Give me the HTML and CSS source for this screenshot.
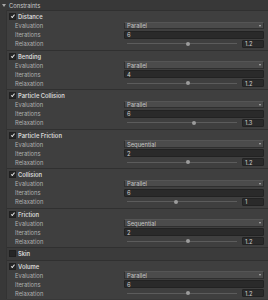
FILE: index.html
```html
<!DOCTYPE html>
<html lang="en">
<head>
<meta charset="UTF-8">
<title>Constraints</title>
<link rel="stylesheet" href="styles.css">
</head>
<body>
<div class="panel">
  <div class="title"><span class="fold"></span>Constraints</div>
  <div class="list">

    <section class="group">
      <div class="head"><span class="check on"></span>Distance</div>
      <div class="row"><span class="label">Evaluation</span><div class="select">Parallel<span class="arrow"></span></div></div>
      <div class="row"><span class="label">Iterations</span><div class="number">6</div></div>
      <div class="row"><span class="label">Relaxation</span><div class="slider"><div class="track"><span class="knob" style="left:55.6%"></span></div><div class="value">1.2</div></div></div>
    </section>

    <section class="group">
      <div class="head"><span class="check on"></span>Bending</div>
      <div class="row"><span class="label">Evaluation</span><div class="select">Parallel<span class="arrow"></span></div></div>
      <div class="row"><span class="label">Iterations</span><div class="number">4</div></div>
      <div class="row"><span class="label">Relaxation</span><div class="slider"><div class="track"><span class="knob" style="left:55.6%"></span></div><div class="value">1.2</div></div></div>
    </section>

    <section class="group">
      <div class="head"><span class="check on"></span>Particle Collision</div>
      <div class="row"><span class="label">Evaluation</span><div class="select">Parallel<span class="arrow"></span></div></div>
      <div class="row"><span class="label">Iterations</span><div class="number">6</div></div>
      <div class="row"><span class="label">Relaxation</span><div class="slider"><div class="track"><span class="knob" style="left:61.1%"></span></div><div class="value">1.3</div></div></div>
    </section>

    <section class="group">
      <div class="head"><span class="check on"></span>Particle Friction</div>
      <div class="row"><span class="label">Evaluation</span><div class="select">Sequential<span class="arrow"></span></div></div>
      <div class="row"><span class="label">Iterations</span><div class="number">2</div></div>
      <div class="row"><span class="label">Relaxation</span><div class="slider"><div class="track"><span class="knob" style="left:55.6%"></span></div><div class="value">1.2</div></div></div>
    </section>

    <section class="group">
      <div class="head"><span class="check on"></span>Collision</div>
      <div class="row"><span class="label">Evaluation</span><div class="select">Parallel<span class="arrow"></span></div></div>
      <div class="row"><span class="label">Iterations</span><div class="number">6</div></div>
      <div class="row"><span class="label">Relaxation</span><div class="slider"><div class="track"><span class="knob" style="left:44.4%"></span></div><div class="value">1</div></div></div>
    </section>

    <section class="group">
      <div class="head"><span class="check on"></span>Friction</div>
      <div class="row"><span class="label">Evaluation</span><div class="select">Sequential<span class="arrow"></span></div></div>
      <div class="row"><span class="label">Iterations</span><div class="number">2</div></div>
      <div class="row"><span class="label">Relaxation</span><div class="slider"><div class="track"><span class="knob" style="left:55.6%"></span></div><div class="value">1.2</div></div></div>
    </section>

    <section class="group off">
      <div class="head"><span class="check"></span>Skin</div>
    </section>

    <section class="group">
      <div class="head"><span class="check on"></span>Volume</div>
      <div class="row"><span class="label">Evaluation</span><div class="select">Parallel<span class="arrow"></span></div></div>
      <div class="row"><span class="label">Iterations</span><div class="number">6</div></div>
      <div class="row"><span class="label">Relaxation</span><div class="slider"><div class="track"><span class="knob" style="left:55.6%"></span></div><div class="value">1.2</div></div></div>
    </section>

  </div>
</div>
</body>
</html>
```

FILE: styles.css
```css
body {
  margin: 0;
  background: #383838;
  font-family: Inter, "Noto Sans", sans-serif;
  font-size: 5.8px;
  color: #c4c4c4;
}

.title {
  height: 10px;
  display: flex;
  align-items: center;
  gap: 3px;
  padding-left: 2px;
  color: #c8c8c8;
}
.fold {
  width: 0;
  height: 0;
  border-left: 2px solid transparent;
  border-right: 2px solid transparent;
  border-top: 3px solid #a8a8a8;
}

.list {
  margin-left: 6px;
  border-left: 1px solid #333;
  background: #3f3f3f;
}

.group {
  border-top: 1px solid #303030;
  padding: 1px 4px 1.5px 2px;
}
.group.off {
  background: #3b3b3b;
}

.head {
  height: 9px;
  display: flex;
  align-items: center;
  gap: 2px;
  color: #d8d8d8;
  font-weight: 600;
}
.check {
  width: 5px;
  height: 5px;
  background: #262626;
  border: 0.5px solid #202020;
  border-radius: 0.5px;
  position: relative;
}
.check.on::after {
  content: "";
  position: absolute;
  left: 1.6px;
  top: 0.4px;
  width: 1.2px;
  height: 2.6px;
  border-right: 0.8px solid #e0e0e0;
  border-bottom: 0.8px solid #e0e0e0;
  transform: rotate(40deg);
}

.row {
  height: 9px;
  display: flex;
  align-items: center;
  padding-left: 6px;
}
.label {
  width: 109px;
  color: #b0b0b0;
}

.select {
  flex: 1;
  height: 7.5px;
  box-sizing: border-box;
  background: #4b4b4b;
  border: 0.5px solid #2f2f2f;
  border-top-color: #555;
  border-radius: 1px;
  display: flex;
  align-items: center;
  padding-left: 2px;
  color: #c4c4c4;
}
.arrow {
  margin-left: auto;
  margin-right: 2.5px;
  width: 0;
  height: 0;
  border-left: 1.5px solid transparent;
  border-right: 1.5px solid transparent;
  border-top: 2px solid #b8b8b8;
}

.number {
  flex: 1;
  height: 8px;
  box-sizing: border-box;
  background: #2a2a2a;
  border: 0.5px solid #222;
  border-radius: 1px;
  display: flex;
  align-items: center;
  padding-left: 2px;
  color: #d0d0d0;
}

.slider {
  flex: 1;
  display: flex;
  align-items: center;
  gap: 2px;
}
.track {
  flex: 1;
  height: 1px;
  margin-left: 3px;
  margin-right: 3px;
  background: #5c5c5c;
  position: relative;
}
.knob {
  position: absolute;
  top: -1.5px;
  width: 4px;
  height: 4px;
  margin-left: -2px;
  border-radius: 50%;
  background: #9c9c9c;
}
.value {
  width: 22px;
  height: 8px;
  box-sizing: border-box;
  background: #2a2a2a;
  border: 0.5px solid #222;
  border-radius: 1px;
  display: flex;
  align-items: center;
  padding-left: 2px;
  color: #d0d0d0;
}
```
